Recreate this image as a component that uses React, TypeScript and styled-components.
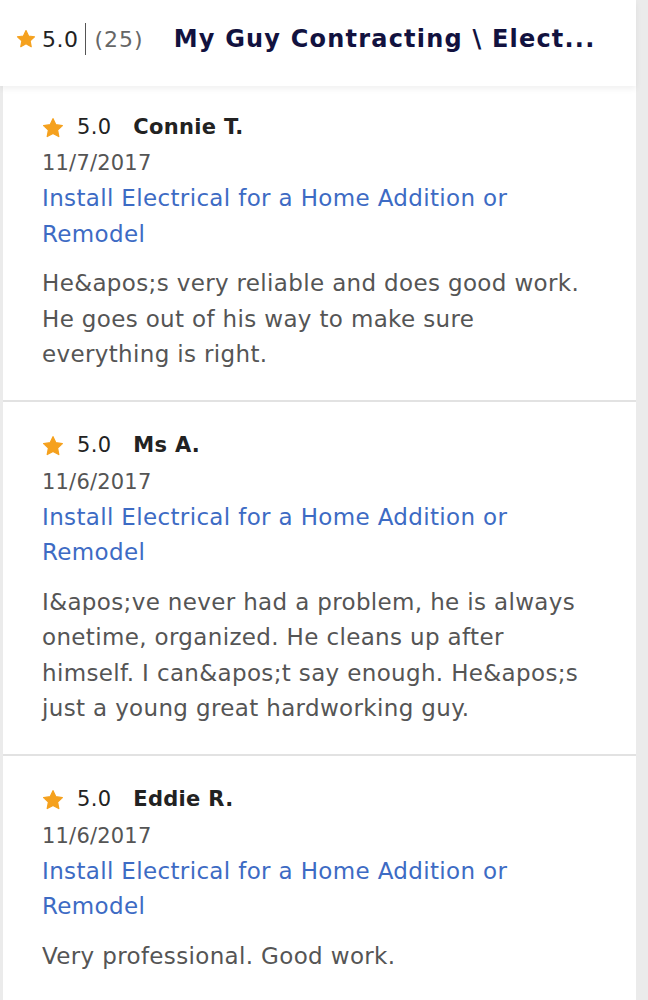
import styled, { createGlobalStyle } from "styled-components";

type Review = {
  rating: string;
  name: string;
  date: string;
  job: string;
  text: string;
};

const REVIEWS: Review[] = [
  {
    rating: "5.0",
    name: "Connie T.",
    date: "11/7/2017",
    job: "Install Electrical for a Home Addition or Remodel",
    text: "He&apos;s very reliable and does good work. He goes out of his way to make sure everything is right.",
  },
  {
    rating: "5.0",
    name: "Ms A.",
    date: "11/6/2017",
    job: "Install Electrical for a Home Addition or Remodel",
    text: "I&apos;ve never had a problem, he is always onetime, organized. He cleans up after himself. I can&apos;t say enough. He&apos;s just a young great hardworking guy.",
  },
  {
    rating: "5.0",
    name: "Eddie R.",
    date: "11/6/2017",
    job: "Install Electrical for a Home Addition or Remodel",
    text: "Very professional. Good work.",
  },
];

export default function App() {
  return (
    <>
      <GlobalStyle />
      <Page>
        <Header>
          <Star size={20} />
          <HeaderRating>5.0</HeaderRating>
          <Divider />
          <HeaderCount>(25)</HeaderCount>
          <Title>My Guy Contracting \ Elect...</Title>
        </Header>
        <List>
          {REVIEWS.map((r) => (
            <Card key={r.name}>
              <RatingRow>
                <Star size={22} />
                <Score>{r.rating}</Score>
                <Name>{r.name}</Name>
              </RatingRow>
              <DateLine>{r.date}</DateLine>
              <JobLink>{r.job}</JobLink>
              <Body>{r.text}</Body>
            </Card>
          ))}
        </List>
      </Page>
    </>
  );
}

function Star({ size }: { size: number }) {
  return (
    <StarSvg width={size} height={size} viewBox="0 0 24 24">
      <path
        d="M12 1.8l3.1 6.6 7.1.9-5.2 4.9 1.3 7.1L12 17.8l-6.3 3.5 1.3-7.1-5.2-4.9 7.1-.9z"
        fill="#f5a11e"
        stroke="#f5a11e"
        strokeWidth="1.4"
        strokeLinejoin="round"
      />
    </StarSvg>
  );
}

const GlobalStyle = createGlobalStyle`
  html, body {
    margin: 0;
    padding: 0;
    background: #ebebeb;
  }
`;

const Page = styled.div`
  width: 636px;
  min-height: 1000px;
  background: #ebebeb;
`;

const Header = styled.header`
  position: relative;
  z-index: 2;
  height: 86px;
  display: flex;
  align-items: center;
  padding: 0 0 8px 16px;
  box-sizing: border-box;
  background: #fff;
  box-shadow: 0 3px 6px rgba(0, 0, 0, 0.06);
  font-family: "DejaVu Sans", sans-serif;
  white-space: nowrap;
`;

const HeaderRating = styled.span`
  margin-left: 6px;
  font-size: 22px;
  letter-spacing: 0.5px;
  color: #222;
`;

const Divider = styled.span`
  width: 1px;
  height: 32px;
  margin: 0 9px 0 6px;
  background: #555;
`;

const HeaderCount = styled.span`
  font-size: 22px;
  letter-spacing: 1px;
  color: #666;
`;

const Title = styled.h1`
  margin: 0 0 0 30px;
  font-size: 24px;
  font-weight: 700;
  letter-spacing: 1.2px;
  color: #12123f;
`;

const List = styled.div`
  display: flex;
  flex-direction: column;
  gap: 2px;
  margin-left: 3px;
  background: #e2e2e2;
`;

const Card = styled.article`
  background: #fff;
  padding: 27px 38px 27px 39px;
  font-family: "DejaVu Sans", sans-serif;
  font-size: 23px;
  letter-spacing: 0.35px;
  line-height: 35.5px;

  &:first-child {
    padding-top: 24px;
  }
`;

const RatingRow = styled.div`
  display: flex;
  align-items: center;
  height: 35px;
  font-size: 21px;
  letter-spacing: 0.3px;
`;

const StarSvg = styled.svg`
  flex: none;
  display: block;
`;

const Score = styled.span`
  margin-left: 13px;
  color: #222;
`;

const Name = styled.span`
  margin-left: 22px;
  font-weight: 700;
  color: #222;
`;

const DateLine = styled.div`
  font-size: 21px;
  line-height: 36px;
  letter-spacing: 0.2px;
  color: #555;
`;

const JobLink = styled.a`
  display: block;
  color: #3d6bc4;
  text-decoration: none;
`;

const Body = styled.p`
  margin: 14px 0 0;
  color: #555;
`;
